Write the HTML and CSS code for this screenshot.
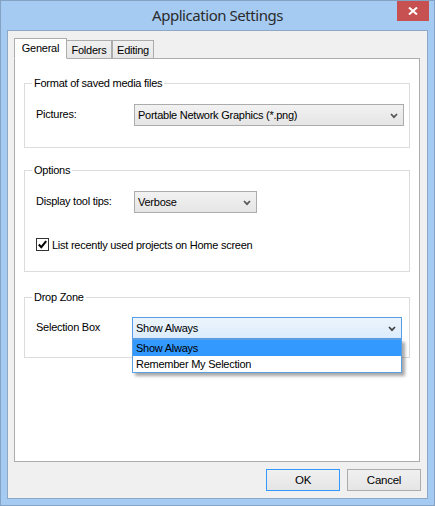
FILE: index.html
```html
<!DOCTYPE html>
<html>
<head>
<meta charset="utf-8">
<link rel="stylesheet" href="styles.css">
</head>
<body>
<div class="window">
  <div class="titlebar">
    <span class="title">Application Settings</span>
    <div class="close">
      <svg width="10" height="8" viewBox="0 0 10 8"><path d="M1 0.5 L9 7.5 M9 0.5 L1 7.5" stroke="#fff" stroke-width="2" fill="none"/></svg>
    </div>
  </div>
  <div class="client">
    <div class="tabs">
      <div class="tab active t-general">General</div>
      <div class="tab t-folders">Folders</div>
      <div class="tab t-editing">Editing</div>
    </div>
    <div class="panel">
      <fieldset class="group g1">
        <legend>Format of saved media files</legend>
        <div class="row">
          <span class="label">Pictures:</span>
          <div class="combo c-pictures">
            <span class="combo-text">Portable Network Graphics (*.png)</span>
            <svg class="chev" width="8" height="6" viewBox="0 0 8 6"><path d="M1 1 L4 4.2 L7 1" stroke="#555" stroke-width="1.7" fill="none"/></svg>
          </div>
        </div>
      </fieldset>
      <fieldset class="group g2">
        <legend>Options</legend>
        <div class="row">
          <span class="label">Display tool tips:</span>
          <div class="combo c-verbose">
            <span class="combo-text">Verbose</span>
            <svg class="chev" width="8" height="6" viewBox="0 0 8 6"><path d="M1 1 L4 4.2 L7 1" stroke="#555" stroke-width="1.7" fill="none"/></svg>
          </div>
        </div>
        <label class="check-row">
          <span class="checkbox">
            <svg width="11" height="11" viewBox="0 0 11 11"><path d="M1.8 5.5 L4.3 8.2 L9.2 2.2" stroke="#000" stroke-width="2" fill="none"/></svg>
          </span>
          <span>List recently used projects on Home screen</span>
        </label>
      </fieldset>
      <fieldset class="group g3">
        <legend>Drop Zone</legend>
        <div class="row">
          <span class="label label-narrow">Selection Box</span>
          <div class="combo combo-open c-selection">
            <span class="combo-text">Show Always</span>
            <svg class="chev" width="8" height="6" viewBox="0 0 8 6"><path d="M1 1 L4 4.2 L7 1" stroke="#444" stroke-width="1.7" fill="none"/></svg>
            <div class="droplist">
              <div class="item selected">Show Always</div>
              <div class="item">Remember My Selection</div>
            </div>
          </div>
        </div>
      </fieldset>
    </div>
    <div class="buttons">
      <div class="btn default">OK</div>
      <div class="btn">Cancel</div>
    </div>
  </div>
</div>
</body>
</html>
```

FILE: styles.css
```css
html, body {
  margin: 0;
  padding: 0;
}

body {
  font-family: "Liberation Sans", Arial, sans-serif;
  font-size: 11px;
  letter-spacing: -0.25px;
  color: #000;
  background: #a5cbf3;
}

.window {
  width: 435px;
  height: 506px;
  box-sizing: border-box;
  border: 1px solid #83a2c4;
  background: #a5cbf3;
  display: flex;
  flex-direction: column;
  position: relative;
}

.titlebar {
  height: 29px;
  flex: none;
  display: flex;
  align-items: center;
  justify-content: center;
  padding-bottom: 2px;
  box-sizing: border-box;
}

.title {
  font-family: "Noto Sans", "Open Sans", sans-serif;
  font-size: 15px;
  letter-spacing: -0.45px;
  color: #2b2b2b;
}

.close {
  position: absolute;
  top: 0;
  right: 5px;
  width: 32px;
  height: 20px;
  background: #c75050;
  display: flex;
  align-items: center;
  justify-content: center;
}

.client {
  flex: 1;
  margin: 0 6px 6px;
  border: 1px solid #8ea7c4;
  background: #f0f0f0;
  padding: 7px 7px 7px 6px;
  display: flex;
  flex-direction: column;
  min-height: 0;
}

.tabs {
  display: flex;
  align-items: flex-end;
  height: 21px;
  margin-bottom: -1px;
  position: relative;
  z-index: 1;
  flex: none;
}

.tab {
  box-sizing: border-box;
  height: 19px;
  border: 1px solid #acacac;
  background: linear-gradient(#f0f0f0, #e6e6e6);
  display: flex;
  align-items: center;
  justify-content: center;
  padding-top: 1px;
}

.tab.active {
  height: 21px;
  background: #fff;
  border-bottom-color: #fff;
  padding-top: 0;
  padding-bottom: 2px;
}

.t-general { width: 53px; }
.t-folders { width: 45px; border-left: none; }
.t-editing { width: 42px; border-left: 1px solid #acacac; margin-left: 0; }

.panel {
  flex: 1;
  background: #fff;
  border: 1px solid #acacac;
  padding: 18px 9px 0 9px;
  display: flex;
  flex-direction: column;
}

.group {
  margin: 0;
  border: 1px solid #dcdcdc;
  padding: 0 5px 0 11px;
  min-width: 0;
}

.group legend {
  padding: 0 2px;
  margin-left: -4px;
  line-height: 13px;
  height: 13px;
}

.g1 { padding-top: 14px; padding-bottom: 21px; }
.g2 { margin-top: 16px; padding-top: 14px; padding-bottom: 20px; }
.g3 { margin-top: 19px; padding-top: 13px; padding-bottom: 18px; }

.row {
  display: flex;
  align-items: center;
  height: 22px;
}

.label {
  width: 98px;
  flex: none;
  margin-top: -3px;
}

.label-narrow { width: 96px; }

.combo {
  box-sizing: border-box;
  height: 22px;
  border: 1px solid #acacac;
  background: linear-gradient(#f2f2f2, #e5e5e5);
  display: flex;
  align-items: center;
  padding-left: 3px;
  position: relative;
  flex: none;
}

.combo-text {
  flex: 1;
}

.chev {
  flex: none;
  margin-right: 5px;
  margin-top: 1px;
}

.c-pictures { width: 270px; }
.c-verbose { width: 123px; }
.c-selection { width: 270px; }

.combo-open {
  border-color: #569de5;
  background: linear-gradient(#ecf4fc, #dcecfc);
}

.droplist {
  position: absolute;
  left: -1px;
  right: -1px;
  top: 100%;
  margin-top: 1px;
  box-sizing: border-box;
  height: 34px;
  background: #fff;
  border: 1px solid #5b9fe3;
  box-shadow: 3px 3px 3px rgba(0, 0, 0, 0.35);
  z-index: 2;
}

.item {
  height: 16px;
  line-height: 16px;
  padding-left: 3px;
}

.item.selected {
  background: #3399ff;
}

.check-row {
  display: flex;
  align-items: center;
  gap: 3px;
  margin-top: 25px;
  height: 13px;
}

.checkbox {
  box-sizing: border-box;
  width: 13px;
  height: 13px;
  border: 1px solid #333;
  background: #fff;
  display: flex;
  align-items: center;
  justify-content: center;
  flex: none;
}

.buttons {
  display: flex;
  justify-content: flex-end;
  gap: 7px;
  margin-top: 7px;
  margin-right: -1px;
  flex: none;
}

.btn {
  box-sizing: border-box;
  width: 74px;
  height: 22px;
  border: 1px solid #acacac;
  background: linear-gradient(#f0f0f0, #e5e5e5);
  display: flex;
  align-items: center;
  justify-content: center;
  font-size: 11.5px;
}

.btn.default {
  border-color: #3399ff;
}
```
